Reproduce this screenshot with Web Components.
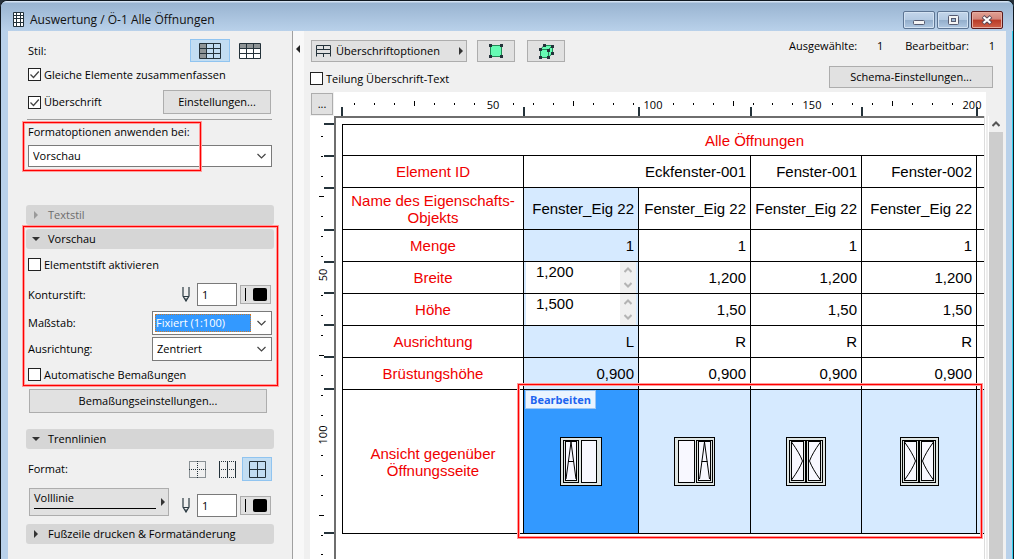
<!DOCTYPE html>
<html lang="de">
<head>
<meta charset="utf-8">
<title>Auswertung / Ö-1 Alle Öffnungen</title>
<style>
  body { margin: 0; font: 11px/16px "Open Sans", "Noto Sans", sans-serif; color: #000; background: #26303a; }
</style>
</head>
<body>
<schedule-window></schedule-window>

<script>
/* Shared rules for every shadow root */
const base = `*, *::before, *::after { box-sizing: border-box; }
  :host { box-sizing: border-box; }
  button, input, select { font: inherit; color: inherit; margin: 0; border-radius: 0; }
  svg { display: block; }
  [hidden] { display: none; }`;

class Base extends HTMLElement {
  connectedCallback() {
    if (this.shadowRoot) return;
    this.attachShadow({ mode: 'open' }).innerHTML = `<style>${base}${this.css()}</style>${this.html()}`;
    this.ready();
  }
  ready() {}
  a(name, fallback = '') { return this.getAttribute(name) ?? fallback; }
}

/* Push button */
customElements.define('ui-button', class extends Base {
  css() { return `
    :host { display: block; height: 24px; }
    button { width: 100%; height: 100%; padding: 0 8px; background: #e1e1e1; border: 1px solid #adadad;
      display: flex; align-items: center; justify-content: center; gap: 5px; white-space: nowrap; }
    :host([icon]) button { padding: 0; }
    :host([spread]) button { justify-content: space-between; padding: 0 3px 0 4px; }
    :host([flat]) button { background: none; border-color: transparent; padding: 0; }
    :host([pressed]) button { background: #c2ddf2; border-color: #90c4f0; padding: 0; }`; }
  html() { return `<button type="button" aria-label="${this.a('label')}"><slot></slot></button>`; }
  ready() { if (!this.hasAttribute('label')) this.shadowRoot.querySelector('button').removeAttribute('aria-label'); }
});

/* Tick box with its label */
customElements.define('ui-check', class extends Base {
  css() { return `
    :host { display: flex; height: 13px; align-items: center; }
    label { display: flex; align-items: center; gap: 3px; white-space: nowrap; }
    span { display: grid; }
    input { appearance: none; grid-area: 1/1; width: 13px; height: 13px; border: 1px solid #222; background: #fff; }
    svg { grid-area: 1/1; pointer-events: none; visibility: hidden; }
    input:checked + svg { visibility: visible; }`; }
  html() { return `<label><span><input type="checkbox" ${this.hasAttribute('checked') ? 'checked' : ''}>
    <svg width="13" height="13"><path d="M2.5 6.5 5.5 9.5 10.8 3.5" fill="none" stroke="#444" stroke-width="1.3"/></svg></span><slot></slot></label>`; }
});

/* Drop-down, with an optional label in front */
customElements.define('ui-select', class extends Base {
  css() { return `
    :host { display: flex; align-items: center; justify-content: space-between; height: 24px; }
    .box { display: grid; grid-template-columns: 1fr 20px; width: var(--box, 120px); height: 100%;
      background: #fff; border: 1px solid #7a7a7a; }
    select { appearance: none; grid-area: 1/1/2/3; border: 0; background: none; padding: 0 20px 0 4px; outline: 0; width: 100%; }
    svg { grid-area: 1/2; place-self: center; pointer-events: none; }
    :host([active]) select { grid-area: 1/1; margin: 2px 0 2px 2px; width: auto; padding: 0; background: #3399ff; color: #fff; border: 1px dotted #c8782c; }
    :host([active]) option { color: #000; background: #fff; }`; }
  html() { return `<label for="s" ${this.a('label') ? '' : 'hidden'}>${this.a('label')}</label>
    <span class="box"><select id="s" aria-label="${this.a('label') || this.a('name')}"><option>${this.a('value')}</option></select>
    <svg width="11" height="8"><path d="M1.5 2 5.5 6 9.5 2" fill="none" stroke="#444" stroke-width="1.2"/></svg></span>`; }
});

/* Pen number with colour swatch */
customElements.define('pen-field', class extends Base {
  css() { return `
    :host { display: flex; align-items: center; height: 23px; }
    label { padding-right: 7px; }
    input { width: 40px; height: 23px; border: 1px solid #7a7a7a; background: #fff; padding: 0 4px; }
    button { margin-left: 3px; width: 31px; height: 19px; padding: 0; background: #e1e1e1; border: 1px solid #adadad; display: grid; place-items: center; }`; }
  html() { return `<label for="p"><svg role="img" aria-label="Stift" width="8" height="15"><path d="M1 0V9L4 14 7 9V0M1.500 9.500H6.500" fill="none" stroke="#2b3a42" stroke-width="1.200"/><path d="M3 11.500H5L4 14Z" fill="#2b3a42"/></svg></label>
    <input id="p" type="text" value="1"><button type="button" aria-label="Stiftfarbe"><svg width="23" height="13"><path d="M1.500 0V13" stroke="#000"/><rect x="9" width="14" height="13" rx="2"/></svg></button>`; }
});

/* Collapsible section header */
customElements.define('section-header', class extends Base {
  css() { return `
    :host { display: block; height: 20px; }
    button { width: 100%; height: 100%; border: 0; border-radius: 3px; background: #d6d6d6; padding: 0 6px;
      display: flex; align-items: center; gap: 8px; text-align: left; }
    :host([disabled]) button { color: #6d6d6d; }`; }
  html() {
    const open = this.hasAttribute('open'), dim = this.hasAttribute('disabled');
    return `<button type="button" aria-expanded="${open}" ${dim ? 'disabled' : ''}><svg width="8" height="8"><path d="${open ? 'M0 2H8L4 6Z' : 'M2 0V8L6 4Z'}" fill="${dim ? '#9a9a9a' : '#333'}"/></svg><slot></slot></button>`;
  }
});

/* Red highlight frame, lies over its positioned parent */
customElements.define('mark-frame', class extends Base {
  css() { return `:host { position: absolute; pointer-events: none; border: 1px solid #ff9c9c; z-index: 2; }
    div { height: 100%; border: 1px solid #f00; box-shadow: inset 0 0 0 1px #ff9c9c; }`; }
  html() { return `<div></div>`; }
});

customElements.define('title-bar', class extends Base {
  css() { return `
    :host { display: flex; align-items: center; height: 31px; padding: 7px 10px 0 12px; gap: 6px;
      background: linear-gradient(#d4e2f2 0 1px, #99b4d1 2px, #b9d1ea); font-size: 12px; color: #111; }
    h1 { font: inherit; margin: 0; flex: 1; white-space: nowrap; }
    nav { display: flex; gap: 2px; }
    button { width: 32px; height: 18px; padding: 0; display: grid; place-items: center; border: 1px solid #5d7593; border-radius: 2px;
      background: linear-gradient(#c3d5ea, #b3c9e2 50%, #93aecb 51%, #b0c8e2); box-shadow: inset 0 0 0 1px #d3e2f2; }
    .x { border-color: #5a1a1c; background: linear-gradient(#e2a193, #d2857a 45%, #b93a26 50%, #d0624a); box-shadow: inset 0 0 0 1px #e6aca0; }`; }
  html() { return `<svg width="11" height="15"><rect width="11" height="15" rx="1" fill="#24323a"/><path d="M1 4h2v2H1zM4 4h3v2H4zM8 4h2v2H8zM1 7h2v3H1zM4 7h3v3H4zM8 7h2v3H8zM1 11h2v3H1zM4 11h3v3H4zM8 11h2v3H8zM1 1h2v2H1zM4 1h3v2H4zM8 1h2v2H8z" fill="#fff"/></svg>
    <h1><slot></slot></h1>
    <nav><button type="button" aria-label="Minimieren"><svg width="12" height="10"><rect x=".5" y="5.500" width="11" height="4" rx="1" fill="#f4f4f4" stroke="#555a70"/></svg></button>
    <button type="button" aria-label="Maximieren"><svg width="11" height="10"><rect x=".5" y=".5" width="10" height="9" rx="1" fill="#f4f4f4" stroke="#555a70"/><rect x="3.500" y="3.500" width="4" height="3" fill="#9db6d2" stroke="#555a70"/></svg></button>
    <button class="x" type="button" aria-label="Schließen"><svg width="12" height="10"><path d="M2 1.500 10 8.500M10 1.500 2 8.500" stroke="#5a4a58" stroke-width="4"/><path d="M2.500 2 9.500 8M9.500 2 2.500 8" stroke="#fff" stroke-width="2.200"/></svg></button></nav>`; }
});

const gridIcon = side => `<svg width="22" height="16"><rect x="1" y="1" width="20" height="14" fill="${side === 'left' ? 'none' : '#fff'}"/><path d="${side === 'left' ? 'M1 1h6v14H1z' : 'M1 1h20v4H1z'}" fill="#8e9496"/><path d="M.5.5h21v15H.5zM7.500 0V16M14.500 0V16M0 5.500H22M0 10.500H22" fill="none" stroke="#24323a"/></svg>`;

customElements.define('side-panel', class extends Base {
  css() { return `
    :host { display: block; width: 285px; flex: none; background: #f0f0f0; border-right: 1px solid #a0a0a0; padding: 8px 18px 15px; }
    .row { display: flex; align-items: center; justify-content: space-between; padding: 0 2px; }
    .end { display: flex; align-items: center; }
    .group { position: relative; }
    hr { border: 0; height: 1px; background: #a0a0a0; margin: 5px 2px 0 1px; }
    .line { width: 140px; height: 28px; margin-left: 1px; }
    .line span { flex: 1; border-bottom: 1px solid #000; text-align: left; height: 20px; line-height: 17px; margin-bottom: 6px; }`; }
  html() { return `
    <div class="row" style="padding-right:4px"><span>Stil:</span><span class="end">
      <ui-button pressed label="Stil Spalten" style="width:40px;height:23px">${gridIcon('left')}</ui-button>
      <ui-button flat label="Stil Zeilen" style="width:40px;height:23px">${gridIcon('top')}</ui-button></span></div>
    <ui-check checked style="margin:6px 2px 0">Gleiche Elemente zusammenfassen</ui-check>
    <div class="row" style="margin-top:9px;padding-right:3px"><ui-check checked>Überschrift</ui-check><ui-button style="width:108px">Einstellungen...</ui-button></div>
    <hr>
    <div class="group" style="margin-top:4px;padding:0 2px">
      <div style="line-height:16px;margin-bottom:5px">Formatoptionen anwenden bei:</div>
      <ui-select name="Formatoptionen anwenden bei" value="Vorschau" style="--box:100%;height:22px"></ui-select>
      <mark-frame style="inset:-3px 72px -5px -4px"></mark-frame>
    </div>
    <section-header disabled style="margin-top:38px">Textstil</section-header>
    <div class="group" style="margin-top:4px">
      <section-header open>Vorschau</section-header>
      <ui-check style="margin:9px 2px 0">Elementstift aktivieren</ui-check>
      <div class="row" style="margin-top:12px;padding-right:3px"><span>Konturstift:</span><pen-field></pen-field></div>
      <ui-select active label="Maßstab:" value="Fixiert (1:100)" style="margin:5px 2px 0"></ui-select>
      <ui-select label="Ausrichtung:" value="Zentriert" style="margin:2px 2px 0"></ui-select>
      <ui-check style="margin:7px 2px 0">Automatische Bemaßungen</ui-check>
      <mark-frame style="inset:-4px -5px -6px -4px"></mark-frame>
    </div>
    <ui-button style="margin:8px 7px 0 3px">Bemaßungseinstellungen...</ui-button>
    <section-header open style="margin-top:16px">Trennlinien</section-header>
    <div class="row" style="margin-top:8px"><span>Format:</span><span class="end">
      <ui-button flat label="Keine Linien" style="width:30px"><svg width="17" height="17"><path d="M.5.5h16v16H.5zM8.500 0V17M0 8.500H17" fill="none" stroke="#24323a" stroke-dasharray="1 1"/></svg></ui-button>
      <ui-button flat label="Vertikale Linien" style="width:30px"><svg width="17" height="17"><path d="M0 .5H17M0 8.500H17M0 16.500H17" fill="none" stroke="#24323a" stroke-dasharray="1 1"/><path d="M.5 0V17M8.500 0V17M16.500 0V17" stroke="#24323a"/></svg></ui-button>
      <ui-button pressed label="Alle Linien" style="width:30px"><svg width="17" height="17"><path d="M.5.5h16v16H.5zM8.500 0V17M0 8.500H17" fill="none" stroke="#24323a"/></svg></ui-button></span></div>
    <div class="row" style="margin-top:7px;height:29px;align-items:flex-end;padding-right:3px">
      <ui-button spread class="line" style="align-self:flex-start"><span>Volllinie</span><svg width="4" height="8"><path d="M0 0V8L4 4Z" fill="#333"/></svg></ui-button>
      <pen-field></pen-field></div>
    <section-header style="margin-top:7px">Fußzeile drucken &amp; Formatänderung</section-header>`; }
});

/* Horizontal or vertical ruler: scale up to "max", plus the cell edges */
customElements.define('sheet-ruler', class extends Base {
  css() { return `:host { display: block; background: #fff; overflow: hidden; min-width: 0; min-height: 0; contain: size; }
    text { font-size: 11px; fill: #000; }`; }
  html() {
    const v = this.hasAttribute('vertical'), edges = this.a('edges').split(' ').map(Number), steps = Number(this.a('steps'));
    let s = '';
    for (let i = 1; i <= steps; i++) {
      const p = Math.round(i * 19.93), big = i % 8 === 4;
      if (i % 8 === 0) s += v
        ? `<text transform="translate(17 ${p}) rotate(-90)" text-anchor="middle">${i / 8 * 50}</text>`
        : `<text x="${p}" y="17" text-anchor="middle">${i / 8 * 50}</text>`;
      else s += v
        ? `<rect x="${big ? 9 : 11}" y="${p}" width="${big ? 5 : 2}" height="1"/>`
        : `<rect x="${p}" y="${big ? 9 : 11}" width="1" height="${big ? 5 : 2}"/>`;
    }
    for (const e of edges) s += v ? `<rect x="14" y="${e}" width="10" height="2" fill="#24323a"/>` : `<rect x="${e}" y="15" width="2" height="9" fill="#24323a"/>`;
    return `<svg width="100%" height="100%">${s}</svg>`;
  }
});

/* Elevation of a two-sash window */
customElements.define('window-view', class extends Base {
  css() { return `:host { display: grid; place-items: center; }`; }
  html() {
    const box = (x, y, w, h, f = '#f8f8ff') => `<rect x="${x + .5}" y="${y + .5}" width="${w - 1}" height="${h - 1}" fill="${f}" stroke="#000"/>`;
    const sash = (x, w) => box(x, 3, w, 43, '#dde2e0') + box(x + 2, 4, w - 4, 40);
    const tilt = x => `<path d="M${x} 5 ${x - 2} 20 ${x - 5} 42M${x} 5 ${x + 2} 20 ${x + 5} 42M${x - 3} 24.500H${x + 3}" fill="none" stroke="#000"/>`;
    const turn = (x, d) => `<path d="M${x} 5 Q${x + d * 8} 16 ${x + d * 11} 24 Q${x + d * 8} 32 ${x} 43" fill="none" stroke="#000"/>`;
    const kinds = {
      a: [42, sash(3, 16) + tilt(11) + box(21, 3, 16, 43)],
      b: [41, box(4, 3, 17, 43) + sash(22, 17) + tilt(30.5)],
      c: [40, sash(3, 17) + sash(20, 17) + turn(5.5, 1) + turn(34.5, -1)],
      d: [39, sash(2, 17) + sash(19, 17) + turn(4.5, 1) + turn(33.5, -1)]
    };
    const [w, body] = kinds[this.a('kind')];
    return `<svg width="${w}" height="49">${box(0, 0, w, 49, '#e0e6e4')}${body}</svg>`;
  }
});

/* Numeric editor placed in a selected cell */
customElements.define('cell-spinner', class extends Base {
  css() { return `
    :host { display: flex; height: 31px; margin: 0 2px; background: #fff; }
    input { flex: 1; min-width: 0; border: 0; padding: 0 0 0 10px; height: 18px; background: none; outline: 0; }
    div { width: 16px; background: #f0f0f0; display: grid; }
    button { border: 0; padding: 0; background: none; display: grid; place-items: center; }`; }
  html() { return `<input type="text" aria-label="${this.a('label')}" value="${this.a('value')}"><div>
    <button type="button" aria-label="Erhöhen"><svg width="8" height="6"><path d="M.5 5 4 1.500 7.500 5" fill="none" stroke="#b4b4b4" stroke-width="2"/></svg></button>
    <button type="button" aria-label="Verringern"><svg width="8" height="6"><path d="M.5 1 4 4.500 7.500 1" fill="none" stroke="#b4b4b4" stroke-width="2"/></svg></button></div>`; }
});

customElements.define('schedule-table', class extends Base {
  css() { return `
    :host { display: block; position: relative; width: 825px; font: 15px/17px "Liberation Sans", Arial, sans-serif; }
    table { width: 100%; table-layout: fixed; border-spacing: 0; border: solid #000; border-width: 1px 0 0 1px; }
    th, td { border: solid #000; border-width: 0 1px 1px 0; padding: 0 4px; text-align: right; white-space: nowrap; }
    th { font-weight: normal; color: #f00000; text-align: center; padding: 0; }
    .sel { background: #d6eaff; }
    .edit { padding: 0; vertical-align: top; }
    .view { background: #d6eaff; padding: 0; }
    .active { background: #3399ff; }
    .active div { display: grid; height: 143px; }
    .active window-view, .active button { grid-area: 1/1; }
    .active button { place-self: start; margin-left: 1px; width: 71px; height: 19px; padding: 0; z-index: 1;
      border: 1px solid #9cc6f4; background: #eaf4ff; color: #1e64f0; font: bold 11px/16px "Open Sans", "Noto Sans", sans-serif; }
    mark-frame { top: 259px; left: 175px; width: 466px; height: 156px; }`; }
  html() {
    const row = (h, name, cells, c0 = 'sel') => `<tr style="height:${h}px"><th scope="row">${name}</th>${cells.map((c, i) => `<td class="${i ? '' : c0}">${c}</td>`).join('')}<td></td></tr>`;
    const edit = (l, v) => `<cell-spinner label="${l}" value="${v}"></cell-spinner>`;
    const rep = v => [v, v, v];
    return `<table><colgroup><col style="width:181px"><col style="width:115px"><col style="width:112px"><col style="width:111px"><col style="width:115px"><col></colgroup>
      <tr style="height:31px"><th colspan="6" scope="colgroup">Alle Öffnungen</th></tr>
      <tr style="height:32px"><th scope="row">Element ID</th><td colspan="2">Eckfenster-001</td><td>Fenster-001</td><td>Fenster-002</td><td></td></tr>
      ${row(42, 'Name des Eigenschafts-<br>Objekts', ['Fenster_Eig 22', ...rep('Fenster_Eig 22')])}
      ${row(32, 'Menge', ['1', ...rep('1')])}
      ${row(32, 'Breite', [edit('Breite', '1,200'), ...rep('1,200')], 'sel edit')}
      ${row(31, 'Höhe', [edit('Höhe', '1,500'), ...rep('1,50')], 'sel edit')}
      ${row(32, 'Ausrichtung', ['L', ...rep('R')])}
      ${row(32, 'Brüstungshöhe', ['0,900', ...rep('0,900')])}
      <tr style="height:144px"><th scope="row">Ansicht gegenüber<br>Öffnungsseite</th>
        <td class="view active"><div><button type="button">Bearbeiten</button><window-view kind="a"></window-view></div></td>
        <td class="view"><window-view kind="b"></window-view></td><td class="view"><window-view kind="c"></window-view></td>
        <td class="view"><window-view kind="d"></window-view></td><td class="view"></td></tr></table>
      <mark-frame></mark-frame>`;
  }
});

const boxDots = pts => pts.map(([x, y]) => `<rect x="${x}" y="${y}" width="3" height="3" fill="#24323a"/>`).join('');

customElements.define('main-pane', class extends Base {
  css() { return `
    :host { display: flex; flex-direction: column; flex: 1; min-width: 0; background: #f0f0f0; padding-left: 6px; }
    header { display: flex; justify-content: space-between; height: 61px; padding: 9px 13px 4px 0; }
    .tools { display: flex; margin: 0 0 10px 1px; }
    .right { display: flex; flex-direction: column; justify-content: space-between; align-items: flex-end; }
    .stats { display: grid; grid-template-columns: auto 26px auto 26px; line-height: 12px; margin: 0 -2px 0 0; }
    .stats span { text-align: right; }
    .stats span:nth-child(3) { margin-left: 22px; }
    .area { flex: 1; display: grid; grid-template-columns: 24px minmax(0, 1fr) 22px; grid-template-rows: 24px 1fr; }
    .more { grid-area: 1/1; width: 22px; height: 22px; margin: 1px; }
    .top { grid-area: 1/2; margin-right: -2px; }
    .side { grid-area: 2/1; }
    .sheet { grid-area: 2/2; background: #fff; border: solid #6e6e6e; border-width: 2px 0 0 2px; padding: 6px 0 10px 6px; overflow: hidden; }
    .scroll { grid-area: 2/3; display: flex; flex-direction: column; align-items: center; padding: 0 0 0 2px;
      background: linear-gradient(90deg, #dcdcdc 0 1px, #fff 1px 2px, #eee 2px 4px, #fff 4px 5px, #f0f0f0 5px); }
    .scroll button { width: 14px; height: 16px; border: 0; padding: 0; background: none; display: grid; place-items: center; }
    .scroll i { width: 14px; flex: 1; background: #cdcdcd; }`; }
  html() { return `
    <header><div><div class="tools">
      <ui-button spread style="width:156px;height:22px"><svg width="15" height="12"><path d="M.5.5h14v4H.5zM.5 4.500v7M14.500 4.500v7M0 8.500H15M7.500 0v5M7.500 8v4" fill="none" stroke="#24323a"/></svg><span style="flex:1;text-align:left">Überschriftoptionen</span><svg width="4" height="8"><path d="M0 0V8L4 4Z" fill="#333"/></svg></ui-button>
      <ui-button icon label="Auswahl 2D" style="width:38px;height:22px;margin-left:10px"><svg width="14" height="14"><rect x="1.500" y="1.500" width="11" height="11" fill="#66fcb4" stroke="#1f8a55"/>${boxDots([[0, 0], [11, 0], [0, 11], [11, 11]])}</svg></ui-button>
      <ui-button icon label="Auswahl 3D" style="width:38px;height:22px;margin-left:12px"><svg width="15" height="15"><path d="M1.500 5.500 5 1.500H13.500V9L9.500 13.500H1.500ZM1.500 5.500H9.500V13.500M9.500 5.500 13.500 1.500" fill="#66fcb4" stroke="#1f8a55"/>${boxDots([[0, 4], [4, 0], [12, 1], [8, 5], [0, 12], [8, 12], [12, 8]])}</svg></ui-button></div>
      <ui-check>Teilung Überschrift-Text</ui-check></div>
      <div class="right"><div class="stats"><span>Ausgewählte:</span><span>1</span><span>Bearbeitbar:</span><span>1</span></div>
        <ui-button style="width:164px;height:22px">Schema-Einstellungen...</ui-button></div></header>
    <div class="area"><ui-button class="more" icon>...</ui-button>
      <sheet-ruler class="top" steps="32" edges="7 189 304 416 527 642"></sheet-ruler>
      <sheet-ruler class="side" vertical steps="22" edges="7 39 71 113 145 176 208 240 272 416"></sheet-ruler>
      <div class="sheet"><schedule-table></schedule-table></div>
      <div class="scroll"><button type="button" aria-label="Nach oben"><svg width="8" height="6"><path d="M.5 5 4 1.500 7.500 5" fill="none" stroke="#555" stroke-width="2"/></svg></button><i></i></div></div>`; }
});

customElements.define('schedule-window', class extends Base {
  css() { return `
    :host { display: flex; flex-direction: column; min-height: 100vh; background: #b9d1ea; border: solid #101820; border-width: 1px 1px 0; border-radius: 7px 7px 0 0; overflow: hidden;
      box-shadow: inset -1px 0 #2fd0f0; }
    title-bar { height: 30px; }
    .body { flex: 1; display: flex; margin: 0 7px; }
    .fold { width: 11px; flex: none; border: 0; padding: 14px 0 0 3px; background: #f8f8f8; display: flex; }`; }
  html() { return `<title-bar>Auswertung / Ö-1 Alle Öffnungen</title-bar>
    <div class="body"><side-panel></side-panel>
    <button class="fold" type="button" aria-label="Leiste einklappen"><svg width="4" height="8"><path d="M4 0V8L0 4Z" fill="#222"/></svg></button>
    <main-pane></main-pane></div>`; }
});
</script>
</body>
</html>
